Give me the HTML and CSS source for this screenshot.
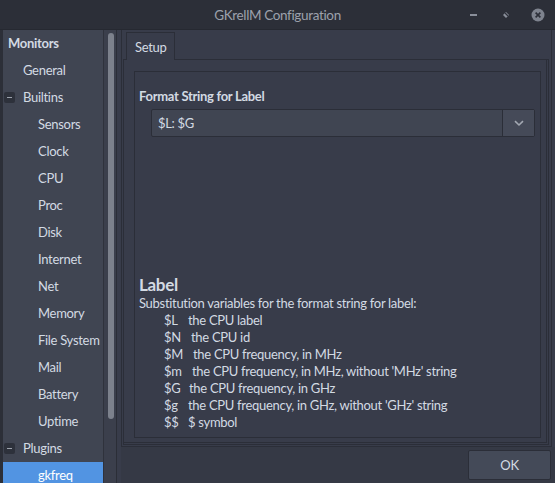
FILE: index.html
```html
<!DOCTYPE html>
<html>
<head>
<meta charset="utf-8">
<link rel="stylesheet" href="styles.css">
</head>
<body>
<div class="window">
  <div class="titlebar">
    <span class="title">GKrellM Configuration</span>
    <div class="controls">
      <span class="ctl-min"></span>
      <svg class="ctl-max" width="8" height="8" viewBox="0 0 8 8"><path d="M1 4 L4 1 L7 4 L4 7 Z" fill="#8a8f9a"/><path d="M3 2 L6 5" stroke="#2c2f38" stroke-width="1.2"/></svg>
      <svg class="ctl-close" width="14" height="14" viewBox="0 0 14 14"><circle cx="7" cy="7" r="6.5" fill="#7e838e"/><path d="M4.6 4.6 L9.4 9.4 M9.4 4.6 L4.6 9.4" stroke="#2c2f38" stroke-width="1.6"/></svg>
    </div>
  </div>
  <div class="body">
    <div class="sidebar">
      <div class="tree">
        <div class="row bold l0">Monitors</div>
        <div class="row l1">General</div>
        <div class="row l1"><span class="exp"></span>Builtins</div>
        <div class="row l2">Sensors</div>
        <div class="row l2">Clock</div>
        <div class="row l2">CPU</div>
        <div class="row l2">Proc</div>
        <div class="row l2">Disk</div>
        <div class="row l2">Internet</div>
        <div class="row l2">Net</div>
        <div class="row l2">Memory</div>
        <div class="row l2">File System</div>
        <div class="row l2">Mail</div>
        <div class="row l2">Battery</div>
        <div class="row l2">Uptime</div>
        <div class="row l1"><span class="exp"></span>Plugins</div>
        <div class="row l2 sel">gkfreq</div>
      </div>
      <div class="scroll"><div class="thumb"></div></div>
    </div>
    <div class="right">
      <div class="nbframe">
        <div class="tabs"><div class="tab">Setup</div></div>
        <div class="page">
          <div class="inner">
            <div class="fmt-title">Format String for Label</div>
            <div class="combo">
              <span class="combo-text">$L: $G</span>
              <span class="combo-btn"><svg width="10" height="7" viewBox="0 0 10 7"><path d="M1 1.2 L5 5 L9 1.2" fill="none" stroke="#a3a8b2" stroke-width="1.6"/></svg></span>
            </div>
            <div class="spacer"></div>
            <div class="help">
              <div class="h-title">Label</div>
              <div>Substitution variables for the format string for label:</div>
              <div class="var"><span class="k">$L</span><span class="d" style="margin-left:0px">the CPU label</span></div>
              <div class="var"><span class="k">$N</span><span class="d" style="margin-left:3px">the CPU id</span></div>
              <div class="var"><span class="k">$M</span><span class="d" style="margin-left:5px">the CPU frequency, in MHz</span></div>
              <div class="var"><span class="k">$m</span><span class="d" style="margin-left:4px">the CPU frequency, in MHz, without 'MHz' string</span></div>
              <div class="var"><span class="k">$G</span><span class="d" style="margin-left:1px">the CPU frequency, in GHz</span></div>
              <div class="var"><span class="k">$g</span><span class="d" style="margin-left:0px">the CPU frequency, in GHz, without 'GHz' string</span></div>
              <div class="var"><span class="k">$$</span><span class="d" style="margin-left:0px">$ symbol</span></div>
            </div>
          </div>
        </div>
      </div>
      <div class="footer">
        <button class="ok">OK</button>
      </div>
    </div>
  </div>
</div>
</body>
</html>
```
FILE: styles.css
```css
* { box-sizing: border-box; }
html, body { margin: 0; padding: 0; }
body {
  width: 555px;
  height: 483px;
  overflow: hidden;
  background: #2c2f38;
  font-family: "Lato", "Noto Sans", sans-serif;
  font-size: 13px;
  letter-spacing: -0.3px;
  color: #d3dae3;
}
.window {
  width: 555px;
  height: 483px;
  display: flex;
  flex-direction: column;
}
.titlebar {
  height: 30px;
  flex: none;
  background: #2c2f38;
  border-bottom: 1px solid #262931;
  display: flex;
  align-items: center;
  justify-content: center;
  position: relative;
}
.title {
  color: #9ca1ac;
  font-size: 13.5px;
  letter-spacing: -0.35px;
  margin-left: 0;
}
.controls {
  position: absolute;
  right: 10px;
  top: 8px;
  display: flex;
  align-items: center;
}
.ctl-min {
  width: 7px;
  height: 2px;
  background: #8a8f9a;
  margin-right: 25px;
}
.ctl-max { margin-right: 21px; }
.body {
  flex: 1;
  display: flex;
  min-height: 0;
  background: #383c4a;
}
.sidebar {
  width: 117px;
  flex: none;
  display: flex;
  background: #2c2f38;
  padding-left: 3px;
  border-right: 1px solid #2b2e37;
}
.tree {
  width: 101px;
  background: #404552;
  border-right: 1px solid #2f323c;
  overflow: hidden;
}
.row {
  height: 27px;
  line-height: 27px;
  white-space: nowrap;
  display: flex;
  align-items: center;
}
.row.bold { font-weight: bold; }
.l0 { padding-left: 5px; }
.l1 { padding-left: 20px; position: relative; }
.l2 { padding-left: 35px; }
.sel { background: #5294e2; color: #ffffff; }
.exp {
  position: absolute;
  left: 1px;
  top: 8px;
  width: 11px;
  height: 11px;
  background: #2d313b;
  border-radius: 2px;
}
.exp::after {
  content: "";
  position: absolute;
  left: 3px;
  top: 5px;
  width: 5px;
  height: 1px;
  background: #9da3ad;
}
.scroll {
  width: 12px;
  background: #3b3f4c;
  padding: 3px 1px 0 4px;
}
.thumb {
  width: 6px;
  height: 386px;
  background: #7c818c;
  border-radius: 3px;
}
.right {
  flex: 1;
  display: flex;
  flex-direction: column;
  min-width: 0;
  padding-left: 4px;
}
.nbframe {
  margin-right: 3px;
  height: 417px;
  border: 1px solid #2b2e38;
  border-top: none;
  display: flex;
  flex-direction: column;
  padding: 2px 2px 1px 1px;
}
.tabs {
  display: flex;
  padding-left: 3px;
  height: 27px;
  flex: none;
}
.tab {
  width: 49px;
  height: 28px;
  border: 1px solid #2b2e38;
  border-bottom: none;
  background: #383c4a;
  padding: 6px 0 0 8px;
  position: relative;
  z-index: 1;
}
.page {
  flex: 1;
  border: 1px solid #2b2e38;
  padding: 11px 7px 6px 10px;
  display: flex;
  box-shadow: inset -2px -2px 0 -1px #383c4a, inset -2px -2px 0 0 #2b2e38;
}
.inner {
  flex: 1;
  border: 1px solid #2b2e38;
  display: flex;
  flex-direction: column;
  padding: 15px 5px 6px 4px;
}
.fmt-title {
  font-weight: bold;
  line-height: 18px;
}
.combo {
  margin: 4px 0 0 12px;
  height: 28px;
  border: 1px solid #2b2e38;
  border-radius: 2px;
  display: flex;
  align-items: center;
  background: #404552;
}
.combo-text { flex: 1; padding-left: 6px; }
.combo-btn {
  width: 32px;
  height: 100%;
  border-left: 1px solid #2b2e38;
  background: #454a58;
  display: flex;
  align-items: center;
  justify-content: center;
}
.spacer { flex: 1; }
.help { line-height: 17px; }
.h-title {
  font-weight: bold;
  font-size: 17px;
  line-height: 20px;
}
.var { padding-left: 25px; display: flex; }
.k { width: 24px; }
.footer {
  flex: 1;
  display: flex;
  justify-content: flex-end;
  align-items: flex-start;
  padding: 3px 4px 0 0;
  background: #353945;
}
.ok {
  width: 83px;
  height: 30px;
  background: #444a58;
  border: 1px solid #2b2e38;
  border-radius: 2px;
  color: #d3dae3;
  font-family: inherit;
  font-size: 13px;
  letter-spacing: -0.3px;
}
```
